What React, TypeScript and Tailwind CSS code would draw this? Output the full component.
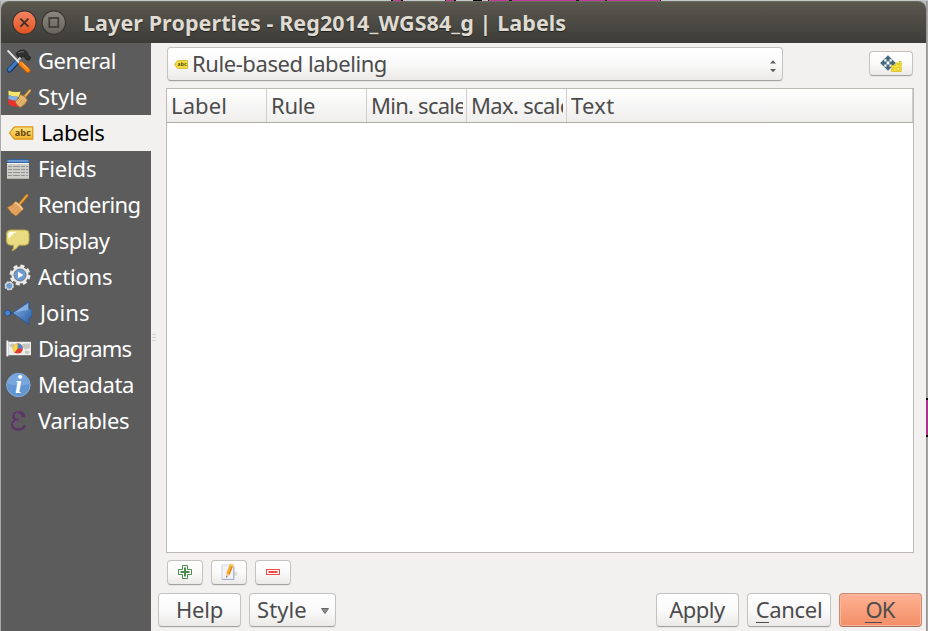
import React from 'react';

const Tools = () => (
  <svg viewBox="0 0 26 26" className="h-[26px] w-[26px]">
    <path d="M11 5.6 Q14 1.5 18.5 2 Q22.4 3 23.6 8.2 L26 9.4 L24 12.4 L20.5 11 L19.5 8.2 L17.5 8.6 L14.5 11 Z" fill="#303030" stroke="#1c1c1c" strokeWidth=".8" />
    <path d="M13 5.2 Q16 3.2 19 3.8" stroke="#777" strokeWidth=".9" fill="none" />
    <path d="M15.5 9.5 L11.5 14" stroke="#c9cccf" strokeWidth="2.4" />
    <path d="M11.4 14.6 L4.6 22" stroke="#173a6b" strokeWidth="5.4" strokeLinecap="round" />
    <path d="M11.1 14.4 L4.4 21.6" stroke="#3f78bd" strokeWidth="3.4" strokeLinecap="round" />
    <path d="M2.6 2.4 L14.5 15" stroke="#e6e8e9" strokeWidth="1.9" />
    <path d="M16 15.8 L23 22.6" stroke="#c75a05" strokeWidth="5" strokeLinecap="round" />
    <path d="M16 15.4 L22.9 22.2" stroke="#ff8a16" strokeWidth="3.6" strokeLinecap="round" />
    <path d="M17.4 15.4 L23 21" stroke="#ffc47a" strokeWidth=".8" />
  </svg>
);

const StyleBrush = () => (
  <svg viewBox="0 0 26 26" className="h-[26px] w-[26px]">
    <path d="M3.5 6.6 Q9 9 15.5 7.6 L14 13 Q8 13 3.5 11 Z" fill="#f7e568" />
    <path d="M3.5 11 Q8 13 13 12.4 L12 17 Q7 17 3.5 15 Z" fill="#84aee2" />
    <path d="M3.5 15 Q7 17.2 11.5 16.6 L17 22 Q9 24 3.5 20.4 Z" fill="#ee2f2c" />
    <path d="M25 6.6 L19 13.6" stroke="#9a6a25" strokeWidth="3" strokeLinecap="round" />
    <path d="M25 6.4 L19 13.4" stroke="#eab766" strokeWidth="1.7" strokeLinecap="round" />
    <path d="M15.2 10.5 Q20.5 11.5 22.4 16.4 Q20.5 20.5 15.5 23.4 Q11.4 21.5 10.2 17.5 Q14 15 15.2 10.5 Z" fill="#e6b570" stroke="#9b6a28" strokeWidth=".7" />
    <path d="M15 14.6 L12.4 17.8 M17.4 15.6 L14 20 M20 17 L16 21.6" stroke="#c8924a" strokeWidth=".7" />
  </svg>
);

const LabelTag = ({ className }: { className: string }) => (
  <svg viewBox="0 0 26 16" className={className}>
    <defs>
      <linearGradient id="tag" x1="0" y1="0" x2="0" y2="1">
        <stop offset="0" stopColor="#ffe17c" />
        <stop offset="1" stopColor="#f2b42c" />
      </linearGradient>
    </defs>
    <path d="M1.5 8 L5.5 2.8 Q6.3 1.8 7.5 1.8 H24.8 V14.2 H7.5 Q6.3 14.2 5.5 13.2 Z" fill="url(#tag)" stroke="#d9951a" strokeWidth="1.2" />
    <text x="14.8" y="11.2" textAnchor="middle" fontSize="9.2" fontWeight="bold" fill="#6b4a14" fontFamily="Noto Sans, sans-serif">abc</text>
  </svg>
);

const SmallTag = () => (
  <svg viewBox="0 0 14 9" className="h-[9px] w-[14px]">
    <path d="M.5 4.5 L3 1.2 Q3.4 .6 4.2 .6 H13.5 V8.4 H4.2 Q3.4 8.4 3 7.8 Z" fill="#f4df3e" stroke="#c9b02a" strokeWidth=".8" />
    <text x="8.1" y="6.3" textAnchor="middle" fontSize="5.2" fontWeight="bold" fill="#5a5018" fontFamily="Noto Sans, sans-serif">abc</text>
  </svg>
);

const Table = () => (
  <svg viewBox="0 0 26 26" className="h-[26px] w-[26px]">
    <rect x="3" y="3" width="22" height="20" fill="#cdcec9" />
    <rect x="3" y="3" width="22" height="4" fill="#34659f" />
    <rect x="3.5" y="4" width="21" height="2" fill="#6797d2" />
    <path d="M3 7.5H25" stroke="#f4f4f2" />
    <path d="M4 10.5H24M4 13.5H24M4 16.5H24M4 19.5H24" strokeDasharray="4 1 7 1" stroke="#92948f" strokeWidth="1" />
    <path d="M3 22.5H25" stroke="#b3b4b0" />
  </svg>
);

const Broom = () => (
  <svg viewBox="0 0 26 26" className="h-[26px] w-[26px]">
    <path d="M22 3.6 L14.5 12.4" stroke="#8a5a16" strokeWidth="3.4" strokeLinecap="round" />
    <path d="M22 3.4 L14.5 12.2" stroke="#efa23a" strokeWidth="2.2" strokeLinecap="round" />
    <path d="M10.4 9.4 Q15.6 11.6 18.4 17 L17 18.6 Q14 21.4 11 24.2 Q5.4 21 2.2 15.4 Q7.4 13.4 10.4 9.4 Z" fill="#e3a560" stroke="#a0692a" strokeWidth=".8" />
    <path d="M10 10.6 Q14.9 12.6 17.4 17.6" stroke="#f7cb93" strokeWidth="1.6" fill="none" />
    <path d="M9 13.4 L5.5 17 M11.5 15 L7.5 19.5 M14 17 L10 21.8" stroke="#cf9150" strokeWidth=".7" />
  </svg>
);

const Bubble = () => (
  <svg viewBox="0 0 26 26" className="h-[26px] w-[26px]">
    <path d="M6.5 2 H21 Q25 2 25 6 V13 Q25 17 21 17.2 H15 Q12.5 21.5 8 22.8 Q10.1 20 9.5 17.2 H6.5 Q2.5 17 2.5 13 V6 Q2.5 2 6.5 2 Z" fill="#e8db82" stroke="#bda648" strokeWidth="1" />
    <path d="M4.3 10.5 V6.4 Q4.3 3.8 7.3 3.7 H13.5 Q9.4 5 8 7 Q6.6 9.4 4.3 10.5Z" fill="#fffef0" />
  </svg>
);

const Gears = () => (
  <svg viewBox="0 0 28 28" className="h-[28px] w-[28px]">
    <circle cx="17" cy="12" r="8.9" fill="none" stroke="#a9a9a6" strokeWidth="3.4" strokeDasharray="4.2 2.79" />
    <circle cx="17" cy="12" r="8.9" fill="none" stroke="#ededeb" strokeWidth="2.6" strokeDasharray="3.6 3.39" strokeDashoffset="-.3" />
    <circle cx="17" cy="12" r="8.6" fill="#e9e9e7" />
    <circle cx="17" cy="12" r="6" fill="#6d9cd2" stroke="#66788c" strokeWidth="1" />
    <path d="M15 8.8 L20.4 12 L15 15.2 Z" fill="#fff" />
    <circle cx="6.2" cy="22.8" r="3.7" fill="none" stroke="#d8d8d6" strokeWidth="2" strokeDasharray="1.8 1.106" />
    <circle cx="6.2" cy="22.8" r="3.4" fill="#6d9cd2" stroke="#dcdcda" strokeWidth="1.1" />
  </svg>
);

const Join = () => (
  <svg viewBox="0 0 28 26" className="h-[26px] w-[28px]">
    <defs>
      <linearGradient id="join" x1="0" y1="0" x2="1" y2="1">
        <stop offset="0" stopColor="#8cb8ea" />
        <stop offset="1" stopColor="#2458a0" />
      </linearGradient>
    </defs>
    <path d="M3 13 H10" stroke="#24497f" strokeWidth="1.4" />
    <circle cx="3.6" cy="13" r="3" fill="#4b83c8" stroke="#244e88" strokeWidth=".9" />
    <path d="M8.5 13 L25 1.5 V8 L28 10 V16.5 L25 18 V24.5 Z" fill="url(#join)" stroke="#28549a" strokeWidth=".8" />
    <path d="M11.5 12 L24 3.8 V10 Z" fill="#b4d0f2" opacity=".55" />
  </svg>
);

const Diagram = () => (
  <svg viewBox="0 0 26 20" className="h-[20px] w-[26px]">
    <rect x="2.5" y="2.8" width="23.5" height="13.4" fill="#eeeeec" />
    <path d="M4.5 5.5 L8 4.5 L10 6 L8 9 L5 8Z M17 5 L25 4.5 L25 9 L20 10.5 L17.6 8Z M20 11.6 L25 12.5 L23 15 L20 14.4Z" fill="#c6c8bf" />
    <rect x="1.4" y="1.4" width="2" height="16" rx="1" fill="#fafafa" stroke="#aaa" strokeWidth=".5" />
    <circle cx="12.8" cy="9.6" r="5" fill="#e23a2c" />
    <path d="M12.8 9.6 V4.6 A5 5 0 0 0 9.6 13.4 Z" fill="#f6d64a" />
    <path d="M12.8 9.6 V4.6 A5 5 0 0 1 17.8 9.6 Z" fill="#4f86c6" />
  </svg>
);

const Info = () => (
  <svg viewBox="0 0 26 26" className="h-[26px] w-[26px]">
    <circle cx="13.4" cy="13" r="11.7" fill="#6196d2" stroke="#86aedd" strokeWidth="1" />
    <path d="M2.6 12 A10.8 10.8 0 0 1 24.2 12 Q13.4 15 2.6 12Z" fill="#76a6dc" />
    <text x="13.4" y="20.8" textAnchor="middle" fontSize="25" fontStyle="italic" fontWeight="bold" fill="#fff" fontFamily="Liberation Serif, serif">i</text>
  </svg>
);

const Epsilon = () => (
  <svg viewBox="0 0 26 26" className="h-[26px] w-[26px]">
    <path d="M19 7.6 Q17.6 4.2 13.8 4.2 Q9 4.4 8.6 8.2 Q8.8 11.6 13.4 12.2 Q7.2 12.8 7 17 Q7.4 21.4 13 21.6 Q17.6 21.4 19.6 18" fill="none" stroke="#5c3566" strokeWidth="2.5" strokeLinecap="round" />
    <circle cx="18" cy="7.4" r="1.9" fill="#5c3566" />
    <path d="M8.6 16 Q9.2 13.6 13 12.6 M9.8 7.4 Q10.8 5 13.6 4.8" fill="none" stroke="#86618f" strokeWidth=".8" />
  </svg>
);

const MoveLabels = () => (
  <svg viewBox="0 0 22 18" className="h-[18px] w-[22px]">
    <path d="M8 .2 L15.8 8 L8 15.8 L.2 8Z" fill="#46697f" />
    <path d="M4.3 4.3h2.2v2.2h-2.2zM9.5 4.3h2.2v2.2h-2.2zM4.3 9.5h2.2v2.2h-2.2zM9.5 9.5h2.2v2.2h-2.2zM6.6 6.6h2.8v2.8h-2.8z" fill="#fff" />
    <path d="M11.5 10.5 H15.5 V8 H18 V10 H19 V6.5 H21.2 V16.4 H11.5 V14 H14 V12.8 H11.5Z" fill="#f9e330" stroke="#d6b81a" strokeWidth=".8" />
    <rect x="17" y="12.5" width="2.5" height="2.5" fill="#fff7b0" stroke="#c9ab16" strokeWidth=".5" />
  </svg>
);

const Plus = () => (
  <svg viewBox="0 0 14 14" className="h-[14px] w-[14px]">
    <path d="M4.5 .5 H9.5 V4.5 H13.5 V9.5 H9.5 V13.5 H4.5 V9.5 H.5 V4.5 H4.5Z" fill="#fff" stroke="#4b8a4b" />
    <path d="M7 2.5V11.5M2.5 7H11.5" stroke="#4b8a4b" strokeWidth="2" />
  </svg>
);

const Edit = () => (
  <svg viewBox="0 0 18 18" className="h-[18px] w-[18px]">
    <path d="M13 9.5 L17 8.6 L17.5 12 L13 13.6Z" fill="#dadada" />
    <rect x="2" y="2" width="12" height="14.6" fill="#f1f3f8" stroke="#c9cdd8" strokeWidth=".8" />
    <path d="M2.2 16.4 H13.8 M13.7 4V16.4" stroke="#9aa5c8" strokeWidth=".9" />
    <path d="M11.3 2.5 L7.9 11.2" stroke="#f8ae2c" strokeWidth="3.6" />
    <path d="M12.3 3 L9 11.6" stroke="#e08010" strokeWidth="1.1" />
    <path d="M9.4 1.8 L13 3 L13.6 1.4 L10.4 .4Z" fill="#f9d24a" />
    <path d="M6.3 10.5 L9.5 11.8 L6.4 14.8Z" fill="#e8c58f" />
    <path d="M6.4 13 L7.4 13.6 L6.3 15Z" fill="#333" />
  </svg>
);

const Minus = () => (
  <svg viewBox="0 0 14 6" className="h-[6px] w-[14px]">
    <rect x=".5" y=".5" width="13" height="5" fill="#fff" stroke="#ef4b46" />
    <path d="M2.5 3H11.5" stroke="#ef4b46" strokeWidth="2" />
  </svg>
);

const items = [
  { name: 'General', icon: <Tools />, pad: 'pl-[4px]', track: 'ml-[7px] tracking-[-0.45px]' },
  { name: 'Style', icon: <StyleBrush />, pad: 'pl-[4px]', track: 'ml-[7px]' },
  { name: 'Labels', icon: <LabelTag className="h-[16px] w-[26px]" />, pad: 'pl-[7px]', track: 'ml-[7px] tracking-[-0.45px]', active: true },
  { name: 'Fields', icon: <Table />, pad: 'pl-[3px]', track: 'ml-[8px] tracking-[-0.15px]' },
  { name: 'Rendering', icon: <Broom />, pad: 'pl-[4px]', track: 'ml-[7px] tracking-[-0.55px]' },
  { name: 'Display', icon: <Bubble />, pad: 'pl-[3px]', track: 'ml-[8px] tracking-[-0.5px]' },
  { name: 'Actions', icon: <Gears />, pad: 'pl-[2px]', track: 'ml-[7px] tracking-[-0.2px]' },
  { name: 'Joins', icon: <Join />, pad: 'pl-[3px]', track: 'ml-[8px] tracking-[0.1px]' },
  { name: 'Diagrams', icon: <Diagram />, pad: 'pl-[4px]', track: 'ml-[7px] tracking-[-0.8px]' },
  { name: 'Metadata', icon: <Info />, pad: 'pl-[4px]', track: 'ml-[7px] tracking-[-0.35px]' },
  { name: 'Variables', icon: <Epsilon />, pad: 'pl-[4px]', track: 'ml-[7px] tracking-[-0.36px]' },
];

const columns = [
  { name: 'Label', cls: 'w-[100px] tracking-[0.1px]' },
  { name: 'Rule', cls: 'w-[100px] tracking-[-0.3px]' },
  { name: 'Min. scale', cls: 'w-[100px] tracking-[-0.75px]' },
  { name: 'Max. scale', cls: 'w-[100px] tracking-[-0.65px]' },
  { name: 'Text', cls: 'flex-1 tracking-[0.3px]' },
];

const face = 'flex shrink-0 items-center rounded-[4px] border border-[#c3c2c0] border-b-[#a3a29f] bg-linear-to-b from-white via-[#fafafa] to-[#ebeae8] shadow-[0_1px_0_#e6e5e3]';

export default function App() {
  return (
    <div className="flex h-[631px] w-[928px] flex-col overflow-hidden bg-[#b9bcbc] font-['Noto_Sans',sans-serif] text-[22px] text-[#4c4c4c]">
      <div className="flex h-px shrink-0 bg-[#c3c7c7]">
        <div className="ml-[391px] h-px w-[2px] bg-black" />
        <div className="h-px w-[8px] bg-[#c23a9c]" />
        <div className="h-px w-[2px] bg-black" />
        <div className="ml-[42px] h-px w-px bg-black" />
        <div className="h-px w-[8px] bg-[#c23a9c]" />
        <div className="h-px w-[2px] bg-black" />
        <div className="ml-[17px] h-px w-[9px] bg-black" />
        <div className="ml-[6px] h-px w-px bg-black" />
        <div className="h-px w-[20px] bg-[#c23a9c]" />
        <div className="h-px w-[3px] bg-black" />
        <div className="h-px w-[64px] bg-[#c23a9c]" />
        <div className="h-px w-[3px] bg-black" />
        <div className="h-px w-[26px] bg-[#c23a9c]" />
        <div className="h-px w-[2px] bg-black" />
        <div className="h-px w-[53px] bg-[#c23a9c]" />
        <div className="h-px w-px bg-black" />
      </div>
      <div className="flex min-h-0 flex-1">
        <div className="w-px shrink-0 bg-[#a9a9a9]" />
        <div className="flex w-[925px] shrink-0 flex-col">
          <header className="flex h-[42px] shrink-0 items-center rounded-t-[8px] border-t border-[#6b6a5c] bg-linear-to-b from-[#5a584f] to-[#3d3c38] pl-[11px]">
            <svg viewBox="0 0 56 26" className="h-[26px] w-[56px] shrink-0">
              <defs>
                <linearGradient id="close" x1="0" y1="0" x2="0" y2="1">
                  <stop offset="0" stopColor="#f58463" />
                  <stop offset="1" stopColor="#e0531f" />
                </linearGradient>
                <linearGradient id="max" x1="0" y1="0" x2="0" y2="1">
                  <stop offset="0" stopColor="#8b897f" />
                  <stop offset="1" stopColor="#66645d" />
                </linearGradient>
              </defs>
              <circle cx="12.4" cy="12.6" r="11.7" fill="url(#close)" stroke="#37352f" strokeWidth="1.2" />
              <path d="M8.4 8.6L16.4 16.6M16.4 8.6L8.4 16.6" stroke="#41302a" strokeWidth="1.8" />
              <circle cx="41.8" cy="12.6" r="11.7" fill="url(#max)" stroke="#37352f" strokeWidth="1.2" />
              <rect x="37.3" y="8" width="9" height="9" fill="none" stroke="#403f3a" strokeWidth="1.8" />
            </svg>
            <h1 className="ml-[15px] mt-px whitespace-nowrap text-[21.5px] font-bold tracking-[0.08px] text-[#dfdbd2] [text-shadow:0_1px_1px_#22211e]">Layer Properties - Reg2014_WGS84_g | Labels</h1>
          </header>

          <div className="flex min-h-0 flex-1 bg-[#f2f1ef]">
            <nav className="flex w-[150px] shrink-0 flex-col bg-[#5c5c5c]">
              {items.map((it) => (
                <div key={it.name} className={`flex h-[36px] shrink-0 items-center ${it.pad} ${it.active ? 'bg-[#f2f1ef] text-black' : 'text-white'}`}>
                  {it.icon}
                  <span className={`-mt-[2px] ${it.track}`}>{it.name}</span>
                </div>
              ))}
            </nav>

            <div className="flex w-[6px] shrink-0 flex-col gap-[2px] pt-[291px]">
              <div className="ml-px h-px w-[4px] bg-[#d2d1cf]" />
              <div className="ml-px h-px w-[4px] bg-[#d2d1cf]" />
              <div className="ml-px h-px w-[4px] bg-[#d2d1cf]" />
            </div>

            <main className="flex w-[769px] flex-col pl-px pt-[4px]">
              <div className="ml-[9px] flex w-[746px] items-start justify-between">
                <div className={`${face} h-[34px] w-[616px] pl-[6px] pr-[5px]`}>
                  <SmallTag />
                  <span className="-mt-px ml-[4px] flex-1 whitespace-nowrap tracking-[-0.42px]">Rule-based labeling</span>
                  <svg viewBox="0 0 8 14" className="mt-[3px] h-[14px] w-[8px]">
                    <path d="M1 4.4 L4 1.2 L7 4.4Z M1 10 L4 13.2 L7 10Z" fill="#5f5f5f" />
                  </svg>
                </div>
                <div className={`${face} mt-[4px] h-[25px] w-[44px] justify-center`}>
                  <MoveLabels />
                </div>
              </div>

              <div className="ml-[8px] mt-[7px] flex h-[465px] w-[748px] shrink-0 flex-col border border-[#bdbab5] bg-white">
                <div className="flex h-[34px] shrink-0 border-b border-[#aeaca8] bg-linear-to-b from-white to-[#efeeed]">
                  {columns.map((c) => (
                    <div key={c.name} className={`flex items-center border-r border-[#d0cfcd] pl-[4px] pr-[3px] ${c.cls}`}>
                      <span className="w-full overflow-hidden whitespace-nowrap">{c.name}</span>
                    </div>
                  ))}
                </div>
              </div>

              <div className="ml-[9px] mt-[7px] flex gap-[8px]">
                <div className={`${face} h-[25px] w-[36px] justify-center pb-px`}><Plus /></div>
                <div className={`${face} h-[25px] w-[36px] justify-center pb-px`}><Edit /></div>
                <div className={`${face} h-[25px] w-[36px] justify-center pb-px`}><Minus /></div>
              </div>

              <div className="mt-[8px] flex">
                <div className={`${face} h-[34px] w-[83px] justify-center pb-[2px] tracking-[-0.2px]`}>Help</div>
                <div className={`${face} ml-[8px] h-[34px] w-[87px] justify-between pb-[2px] pl-[7px] pr-[5px] tracking-[0.1px]`}>
                  Style
                  <svg viewBox="0 0 10 8" className="mt-[4px] h-[8px] w-[10px]">
                    <path d="M1.5 1.5 H8.5 L5 6.5Z" fill="#8f8f8f" stroke="#5c5c5c" strokeWidth=".9" />
                  </svg>
                </div>
                <div className={`${face} ml-auto h-[34px] w-[83px] justify-center pb-[2px] pr-px tracking-[-0.5px]`}>Apply</div>
                <div className={`${face} ml-[8px] h-[34px] w-[84px] justify-center pb-[2px] tracking-[-0.3px]`}>
                  <span className="border-b border-[#4c4c4c] leading-[26px]">C</span>
                  <span className="border-b border-transparent leading-[26px]">ancel</span>
                </div>
                <div className="ml-[8px] mr-[4px] flex h-[34px] w-[83px] items-center justify-center rounded-[4px] border border-[#c98a72] border-b-[#a7705b] bg-linear-to-b from-[#ffb295] to-[#f28e66] pb-[2px] pr-px tracking-[-0.9px] shadow-[inset_0_0_0_1px_#fbb79c]">
                  <span className="border-b border-[#4c4c4c] leading-[26px]">O</span>
                  <span className="border-b border-transparent leading-[26px]">K</span>
                </div>
              </div>
            </main>
          </div>
        </div>
        <div className="flex w-[2px] shrink-0 flex-col bg-linear-to-r from-[#8c8c8c] to-[#b0b0b0] pt-[397px]">
          <div className="h-[39px] border-y-2 border-black bg-[#b0308c]" />
        </div>
      </div>
    </div>
  );
}
